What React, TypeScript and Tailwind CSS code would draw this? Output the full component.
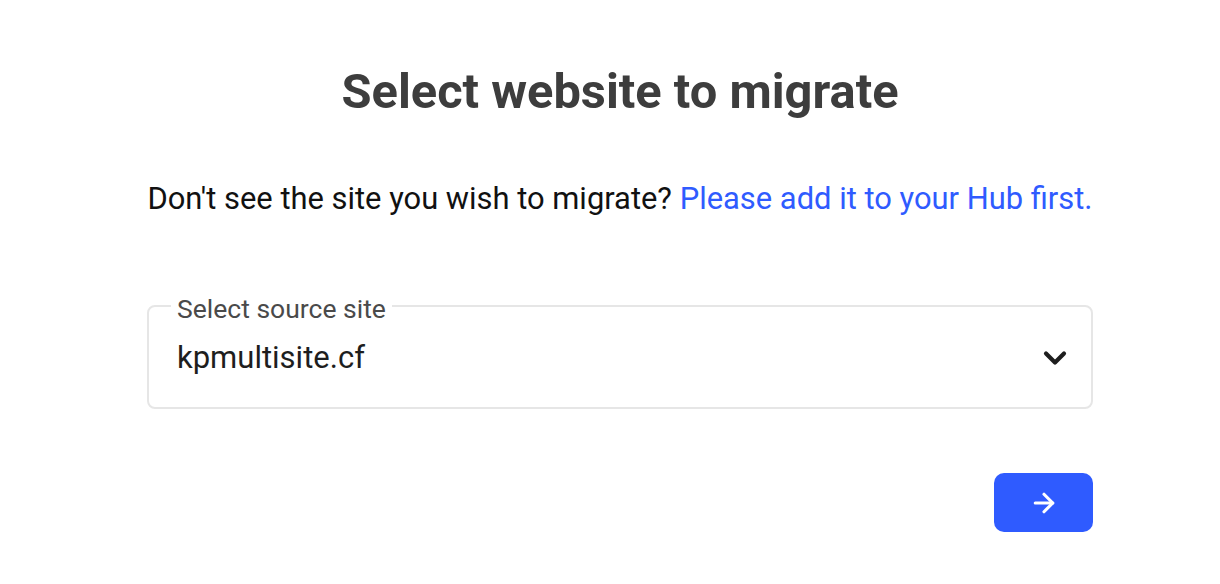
import { ChevronDown, ArrowRight } from 'lucide-react'

export default function App() {
  return (
    <div className="min-h-[584px] w-full bg-white font-['Roboto',sans-serif]">
      <div className="ml-[147px] flex w-[946px] flex-col pt-[64px]">
        <h1 className="text-center text-[48.8px] font-bold leading-[56px] text-[#3d3d3d]">
          Select website to migrate
        </h1>

        <p className="mt-[61px] text-center text-[30.9px] leading-[36px] whitespace-nowrap text-[#111]">
          Don't see the site you wish to migrate?{' '}
          <a href="#" className="text-[#2f5bff]">Please add it to your Hub first.</a>
        </p>

        <fieldset className="mt-[77px] h-[115px] rounded-[8px] border-2 border-[#e6e6e6] px-[22px]">
          <legend className="px-[6px] text-[26.5px] leading-[24px] text-[#4a4a4a]">
            <span className="relative top-[3px]">Select source site</span>
          </legend>
          <div className="flex items-center justify-between pt-[21px] pl-[6px]">
            <span className="text-[31px] leading-[38px] text-[#1e1e1e]">kpmultisite.cf</span>
            <ChevronDown className="mr-[-4px] h-[36px] w-[36px] text-[#1e1e1e]" strokeWidth={2.8} />
          </div>
        </fieldset>

        <div className="mt-[64px] flex justify-end">
          <button className="flex h-[59px] w-[99px] items-center justify-center rounded-[10px] bg-[#2f5bff]">
            <ArrowRight className="h-[30px] w-[30px] text-white" strokeWidth={2.5} />
          </button>
        </div>
      </div>
    </div>
  )
}
